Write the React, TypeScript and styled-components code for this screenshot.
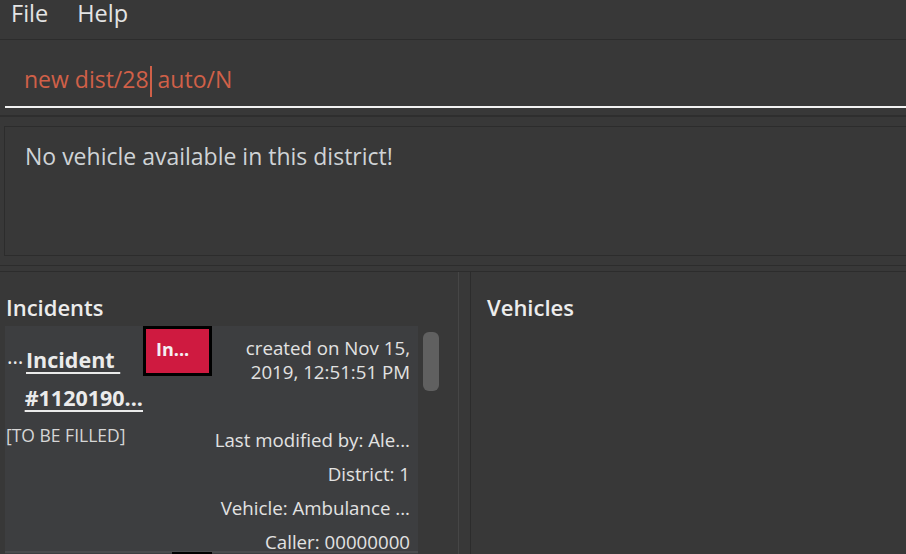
import styled, { createGlobalStyle } from 'styled-components';

const GlobalStyle = createGlobalStyle`
  html, body {
    margin: 0;
    padding: 0;
    background: #383838;
  }
  * {
    box-sizing: border-box;
  }
`;

const Window = styled.div`
  width: 906px;
  height: 554px;
  overflow: hidden;
  display: flex;
  flex-direction: column;
  background: #383838;
  font-family: "Open Sans", "Noto Sans", sans-serif;
  color: #e6e6e6;
`;

const MenuBar = styled.nav`
  height: 40px;
  flex-shrink: 0;
  display: flex;
  align-items: flex-start;
  gap: 29px;
  padding: 0 0 0 11px;
  border-bottom: 1px solid #2c2c2c;
  font-size: 23.5px;
  line-height: 27px;
  color: #e4e4e4;
`;

const MenuItem = styled.span``;

const CommandArea = styled.section`
  height: 77px;
  flex-shrink: 0;
  padding: 0 0 0 5px;
  display: flex;
  align-items: flex-end;
  border-bottom: 2px solid #2e2e2e;
`;

const CommandField = styled.div`
  flex: 1;
  height: 68px;
  margin-bottom: 7px;
  display: flex;
  align-items: center;
  white-space: pre;
  padding: 12px 0 0 19px;
  border-bottom: 2px solid #f2f2f2;
  font-size: 23px;
  color: #d06048;
`;

const Caret = styled.span`
  display: inline-block;
  width: 2px;
  height: 31px;
  margin: 4px 0 0 1px;
  background: #d06048;
`;

const ResultArea = styled.section`
  height: 149px;
  flex-shrink: 0;
  padding: 9px 0 9px 4px;
  border-bottom: 1px solid #2c2c2c;
`;

const ResultBox = styled.div`
  height: 100%;
  margin-right: -4px;
  border: 1px solid #2c2c2c;
  border-right: none;
  padding: 13px 0 0 20px;
  font-size: 23px;
  color: #cfd3d6;
`;

const Split = styled.div`
  flex: 1;
  display: flex;
  margin-top: 5px;
  border-top: 1px solid #2c2c2c;
  min-height: 0;
`;

const Panel = styled.section<{ $width?: number }>`
  ${(p) => (p.$width ? `width: ${p.$width}px;` : 'flex: 1;')}
  display: flex;
  flex-direction: column;
  min-height: 0;
`;

const LeftPanel = styled(Panel)`
  border-right: 1px solid #464646;
`;

const RightPanel = styled(Panel)`
  margin-left: 11px;
  border-left: 1px solid #2c2c2c;
`;

const PanelTitle = styled.h2<{ $left: number }>`
  margin: 0;
  height: 54px;
  flex-shrink: 0;
  padding: 20px 0 0 ${(p) => p.$left}px;
  font-size: 22px;
  line-height: 30px;
  font-weight: 600;
  color: #ececec;
`;

const ListArea = styled.div`
  flex: 1;
  display: flex;
  padding-left: 5px;
  min-height: 0;
`;

const CardColumn = styled.div`
  width: 413px;
  display: flex;
  flex-direction: column;
`;

const Card = styled.article`
  height: 225px;
  flex-shrink: 0;
  display: grid;
  grid-template-columns: 138px 69px 1fr;
  background: #3d3e40;
`;

const NextCard = styled.div`
  height: 10px;
  flex-shrink: 0;
  border-top: 2px solid #4a4b4d;
  background: #3d3e40;
  position: relative;
`;

const NextBadgeEdge = styled.span`
  position: absolute;
  left: 167px;
  top: -1px;
  width: 40px;
  height: 8px;
  background: #000;
`;

const TitleColumn = styled.div`
  display: flex;
  flex-direction: column;
  padding-top: 14px;
`;

const TitleLine = styled.div`
  height: 38px;
  display: flex;
  align-items: center;
  font-size: 21.5px;
  font-weight: 700;
  color: #ebebeb;
`;

const Dots = styled.span`
  width: 21px;
  padding: 0 0 6px 2px;
  font-size: 21px;
  font-weight: 400;
`;

const Underlined = styled.span`
  text-decoration: underline;
  text-decoration-thickness: 2px;
  text-underline-offset: 4px;
  white-space: pre;
`;

const Placeholder = styled.div`
  margin-top: 7px;
  padding-left: 1px;
  font-size: 17.5px;
  color: #d6d6d6;
`;

const Badge = styled.div`
  width: 69px;
  height: 50px;
  border: 3px solid #000;
  background: #cf1a40;
  display: flex;
  align-items: center;
  padding: 0 0 4px 10px;
  font-size: 18px;
  font-weight: 700;
  color: #f4f0f4;
`;

const InfoColumn = styled.div`
  display: flex;
  flex-direction: column;
  align-items: flex-end;
  padding: 10px 8px 0 0;
  font-size: 18.7px;
  color: #e2e2e2;
  text-align: right;
  white-space: nowrap;
`;

const DateLine = styled.div`
  height: 24px;
  line-height: 24px;
`;

const Fields = styled.div`
  margin-top: 39px;
  display: flex;
  flex-direction: column;
  align-items: flex-end;
`;

const Field = styled.div`
  height: 34px;
  line-height: 34px;
`;

const Track = styled.div`
  width: 32px;
  padding: 6px 0 0 5px;
`;

const Thumb = styled.div`
  width: 16px;
  height: 59px;
  border-radius: 6px;
  background: #606060;
`;

export default function App() {
  return (
    <>
      <GlobalStyle />
      <Window>
        <MenuBar>
          <MenuItem>File</MenuItem>
          <MenuItem>Help</MenuItem>
        </MenuBar>

        <CommandArea>
          <CommandField>
            {'new dist/28'}
            <Caret />
            {' auto/N'}
          </CommandField>
        </CommandArea>

        <ResultArea>
          <ResultBox>No vehicle available in this district!</ResultBox>
        </ResultArea>

        <Split>
          <LeftPanel $width={459}>
            <PanelTitle $left={6}>Incidents</PanelTitle>
            <ListArea>
              <CardColumn>
                <Card>
                  <TitleColumn>
                    <TitleLine>
                      <Dots>…</Dots>
                      <Underlined>Incident </Underlined>
                    </TitleLine>
                    <TitleLine>
                      <Dots />
                      <Underlined>#1120190...</Underlined>
                    </TitleLine>
                    <Placeholder>[TO BE FILLED]</Placeholder>
                  </TitleColumn>
                  <div>
                    <Badge>In...</Badge>
                  </div>
                  <InfoColumn>
                    <DateLine>created on Nov 15,</DateLine>
                    <DateLine>2019, 12:51:51 PM</DateLine>
                    <Fields>
                      <Field>Last modified by: Ale...</Field>
                      <Field>District: 1</Field>
                      <Field>Vehicle: Ambulance ...</Field>
                      <Field>Caller: 00000000</Field>
                    </Fields>
                  </InfoColumn>
                </Card>
                <NextCard>
                  <NextBadgeEdge />
                </NextCard>
              </CardColumn>
              <Track>
                <Thumb />
              </Track>
            </ListArea>
          </LeftPanel>

          <RightPanel>
            <PanelTitle $left={16}>Vehicles</PanelTitle>
          </RightPanel>
        </Split>
      </Window>
    </>
  );
}
